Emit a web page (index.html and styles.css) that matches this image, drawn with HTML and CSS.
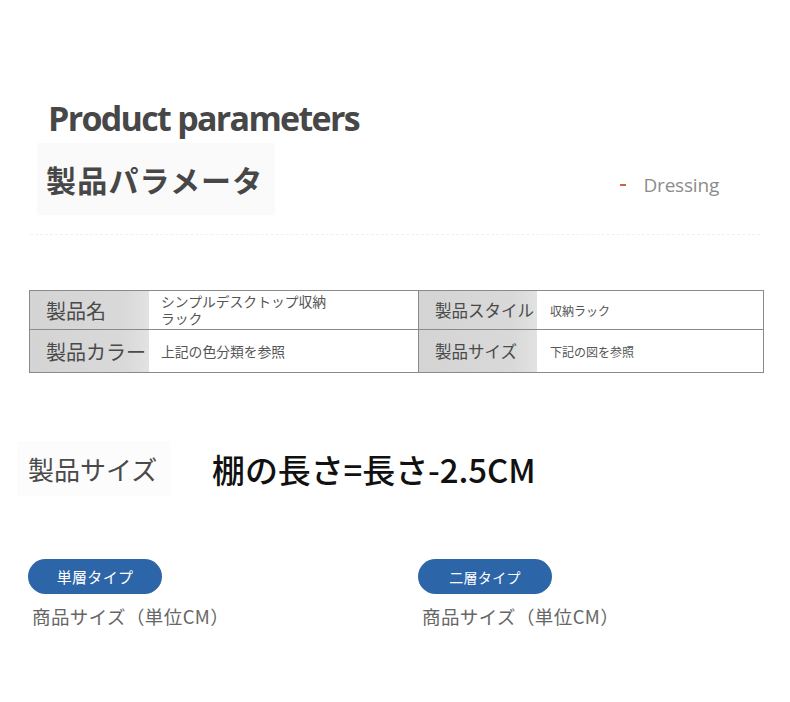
FILE: index.html
```html
<!DOCTYPE html>
<html lang="ja">
<head>
<meta charset="utf-8">
<link rel="stylesheet" href="styles.css">
</head>
<body>
<div class="page">
  <h1 class="title">Product parameters</h1>
  <div class="subrow">
    <div class="subtitle">製品パラメータ</div>
    <div class="brand"><span class="dash"></span><span class="brand-text">Dressing</span></div>
  </div>
  <div class="dots"></div>

  <div class="table">
    <div class="cell label big">製品名</div>
    <div class="cell value"><span class="line">シンプルデスクトップ収納</span><span class="line">ラック</span></div>
    <div class="cell label small">製品スタイル</div>
    <div class="cell value tiny">収納ラック</div>
    <div class="cell label big">製品カラー</div>
    <div class="cell value">上記の色分類を参照</div>
    <div class="cell label small">製品サイズ</div>
    <div class="cell value tiny">下記の図を参照</div>
  </div>

  <div class="size-row">
    <div class="size-label">製品サイズ</div>
    <div class="size-note">棚の長さ=長さ-2.5CM</div>
  </div>

  <div class="types">
    <div class="type">
      <div class="pill">単層タイプ</div>
      <div class="caption">商品サイズ（単位CM）</div>
    </div>
    <div class="type">
      <div class="pill pill-two">二層タイプ</div>
      <div class="caption">商品サイズ（単位CM）</div>
    </div>
  </div>
</div>
</body>
</html>
```

FILE: styles.css
```css
html, body {
  margin: 0;
  padding: 0;
  background: #ffffff;
}

.page {
  width: 790px;
  height: 702px;
  font-family: "Noto Sans CJK JP", "Noto Sans", sans-serif;
  color: #444;
  overflow: hidden;
}

.title {
  margin: 0;
  padding: 98px 0 0 48px;
  font-family: "Open Sans", "Noto Sans", sans-serif;
  font-weight: 700;
  font-size: 34px;
  line-height: 40px;
  letter-spacing: -1.7px;
  color: #474747;
}

.subrow {
  display: flex;
  justify-content: space-between;
  align-items: center;
  padding: 5px 71px 0 37px;
}

.subtitle {
  background: #fafafa;
  width: 229px;
  height: 72px;
  padding-left: 9px;
  display: flex;
  align-items: center;
  font-weight: 700;
  font-size: 30px;
  color: #474747;
  letter-spacing: 1.2px;
}

.brand {
  display: flex;
  align-items: center;
  gap: 18px;
  padding-top: 12px;
}

.dash {
  display: block;
  width: 6px;
  height: 2px;
  background: #d2643c;
}

.brand-text {
  font-family: "Open Sans", "Noto Sans", sans-serif;
  font-size: 19px;
  color: #8c8c8c;
  letter-spacing: -0.2px;
}

.dots {
  margin: 19px 30px 0 30px;
  border-top: 1px dashed #f0f0f0;
}

.table {
  margin: 55px 26px 0 29px;
  display: grid;
  grid-template-columns: 119px 269px 119px 1fr;
  grid-template-rows: 39px 42px;
  border: 1.5px solid #8a8a8a;
}

.cell {
  display: flex;
  align-items: center;
  border-bottom: 1.5px solid #8a8a8a;
}

.cell:nth-child(n+5) {
  border-bottom: none;
}

.label {
  background: linear-gradient(90deg, #d4d4d4 0%, #d9d9d9 80%, #e2e2e2 100%);
  color: #4a4a4a;
  white-space: nowrap;
}

.label.big {
  font-size: 20px;
  padding-left: 16px;
}

.label.small {
  font-size: 16.5px;
  padding-left: 16px;
  border-left: 1.5px solid #8a8a8a;
}

.value {
  font-size: 13.8px;
  line-height: 17px;
  color: #555;
  padding-left: 12px;
}

.value .line {
  display: block;
}

.cell.value:nth-child(2) {
  flex-direction: column;
  align-items: flex-start;
  justify-content: center;
}

.value.tiny {
  font-size: 12px;
  padding-left: 13px;
}

.size-row {
  display: flex;
  align-items: center;
  margin-top: 68px;
  padding-left: 17px;
}

.size-label {
  background: #fcfcfc;
  height: 55px;
  width: 142px;
  padding-left: 11px;
  display: flex;
  align-items: center;
  font-size: 26px;
  color: #4a4a4a;
}

.size-note {
  margin-left: 42px;
  font-size: 33px;
  font-weight: 500;
  color: #111;
  letter-spacing: -0.1px;
}

.types {
  display: grid;
  grid-template-columns: 390px 1fr;
  margin-top: 63px;
  padding-left: 28px;
}

.pill {
  width: 134px;
  height: 35px;
  border-radius: 18px;
  background: #2d65a9;
  color: #fff;
  font-size: 15px;
  display: flex;
  align-items: center;
  justify-content: center;
  letter-spacing: 0.3px;
}

.pill-two {
  font-size: 14px;
}

.caption {
  margin-top: 9px;
  padding-left: 4px;
  font-size: 18.5px;
  color: #666;
  letter-spacing: 0.4px;
}
```
